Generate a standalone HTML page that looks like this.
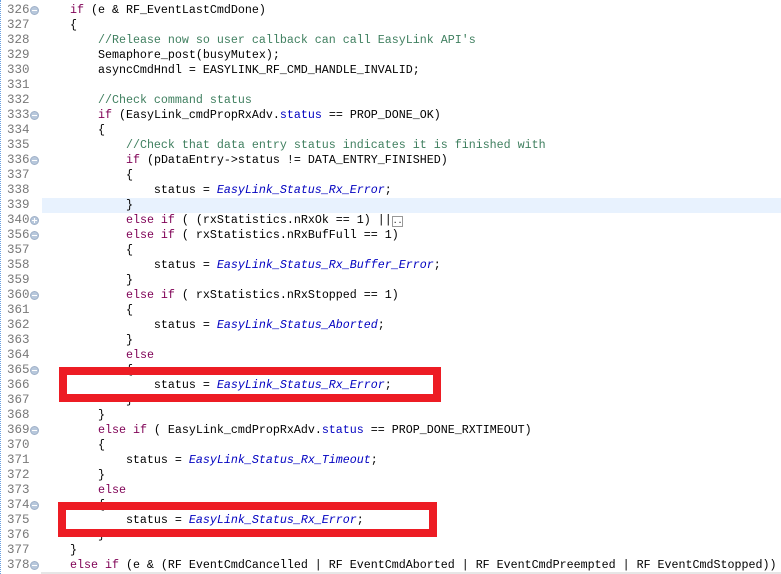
<!DOCTYPE html>
<html><head><meta charset="utf-8"><style>
body{margin:0;width:781px;height:574px;overflow:hidden;background:#fff;position:relative;font-family:"Liberation Mono",monospace;font-size:11.67px;}
#gut{position:absolute;left:0;top:0;width:41px;height:574px;border-left:1px dotted #6aa0e0;box-sizing:border-box;}
.r{position:absolute;left:0;height:15px;line-height:15px;white-space:pre;width:781px}
.n{position:absolute;left:7px;color:#787878;font-size:12.5px}
.c{position:absolute;left:42px;color:#000}
.k{color:#7f0055}
.m{color:#3f7f5f}
.e{color:#0000c0;font-style:italic}
.f{position:absolute;left:30px;top:3px;width:9px;height:9px;border-radius:50%;background:#b8c8dc;border:1px solid #9fb0c8;box-sizing:border-box}
.f::after{content:"";position:absolute;left:1px;top:3px;width:5px;height:1px;background:#fff}
.p::before{content:"";position:absolute;left:3px;top:1px;width:1px;height:5px;background:#fff}
.hl{background:#e8f2fe}
.box{position:absolute;border:8px solid #ed1c24;box-sizing:border-box}
</style></head><body>
<div id="gut"></div>
<div class="r" style="top:3px"><span class="n">326</span><i class="f"></i><span class="c">    <span class="k">if</span> (e &amp; RF_EventLastCmdDone)</span></div>
<div class="r" style="top:18px"><span class="n">327</span><span class="c">    {</span></div>
<div class="r" style="top:33px"><span class="n">328</span><span class="c">        <span class="m">//Release now so user callback can call EasyLink API's</span></span></div>
<div class="r" style="top:48px"><span class="n">329</span><span class="c">        Semaphore_post(busyMutex);</span></div>
<div class="r" style="top:63px"><span class="n">330</span><span class="c">        asyncCmdHndl = EASYLINK_RF_CMD_HANDLE_INVALID;</span></div>
<div class="r" style="top:78px"><span class="n">331</span></div>
<div class="r" style="top:93px"><span class="n">332</span><span class="c">        <span class="m">//Check command status</span></span></div>
<div class="r" style="top:108px"><span class="n">333</span><i class="f"></i><span class="c">        <span class="k">if</span> (EasyLink_cmdPropRxAdv.<span style="color:#0000c0">status</span> == PROP_DONE_OK)</span></div>
<div class="r" style="top:123px"><span class="n">334</span><span class="c">        {</span></div>
<div class="r" style="top:138px"><span class="n">335</span><span class="c">            <span class="m">//Check that data entry status indicates it is finished with</span></span></div>
<div class="r" style="top:153px"><span class="n">336</span><i class="f"></i><span class="c">            <span class="k">if</span> (pDataEntry-&gt;status != DATA_ENTRY_FINISHED)</span></div>
<div class="r" style="top:168px"><span class="n">337</span><span class="c">            {</span></div>
<div class="r" style="top:183px"><span class="n">338</span><span class="c">                status = <span class="e">EasyLink_Status_Rx_Error</span>;</span></div>
<div class="r" style="top:198px"><span class="n">339</span><span class="c hl" style="width:739px">            }</span></div>
<div class="r" style="top:213px"><span class="n">340</span><i class="f p"></i><span class="c">            <span class="k">else if</span> ( (rxStatistics.nRxOk == 1) ||<span style="border:1px solid #999;font-size:8px">..</span></span></div>
<div class="r" style="top:228px"><span class="n">356</span><i class="f"></i><span class="c">            <span class="k">else if</span> ( rxStatistics.nRxBufFull == 1)</span></div>
<div class="r" style="top:243px"><span class="n">357</span><span class="c">            {</span></div>
<div class="r" style="top:258px"><span class="n">358</span><span class="c">                status = <span class="e">EasyLink_Status_Rx_Buffer_Error</span>;</span></div>
<div class="r" style="top:273px"><span class="n">359</span><span class="c">            }</span></div>
<div class="r" style="top:288px"><span class="n">360</span><i class="f"></i><span class="c">            <span class="k">else if</span> ( rxStatistics.nRxStopped == 1)</span></div>
<div class="r" style="top:303px"><span class="n">361</span><span class="c">            {</span></div>
<div class="r" style="top:318px"><span class="n">362</span><span class="c">                status = <span class="e">EasyLink_Status_Aborted</span>;</span></div>
<div class="r" style="top:333px"><span class="n">363</span><span class="c">            }</span></div>
<div class="r" style="top:348px"><span class="n">364</span><span class="c">            <span class="k">else</span></span></div>
<div class="r" style="top:363px"><span class="n">365</span><i class="f"></i><span class="c">            {</span></div>
<div class="r" style="top:378px"><span class="n">366</span><span class="c">                status = <span class="e">EasyLink_Status_Rx_Error</span>;</span></div>
<div class="r" style="top:393px"><span class="n">367</span><span class="c">            }</span></div>
<div class="r" style="top:408px"><span class="n">368</span><span class="c">        }</span></div>
<div class="r" style="top:423px"><span class="n">369</span><i class="f"></i><span class="c">        <span class="k">else if</span> ( EasyLink_cmdPropRxAdv.<span style="color:#0000c0">status</span> == PROP_DONE_RXTIMEOUT)</span></div>
<div class="r" style="top:438px"><span class="n">370</span><span class="c">        {</span></div>
<div class="r" style="top:453px"><span class="n">371</span><span class="c">            status = <span class="e">EasyLink_Status_Rx_Timeout</span>;</span></div>
<div class="r" style="top:468px"><span class="n">372</span><span class="c">        }</span></div>
<div class="r" style="top:483px"><span class="n">373</span><span class="c">        <span class="k">else</span></span></div>
<div class="r" style="top:498px"><span class="n">374</span><i class="f"></i><span class="c">        {</span></div>
<div class="r" style="top:513px"><span class="n">375</span><span class="c">            status = <span class="e">EasyLink_Status_Rx_Error</span>;</span></div>
<div class="r" style="top:528px"><span class="n">376</span><span class="c">        }</span></div>
<div class="r" style="top:543px"><span class="n">377</span><span class="c">    }</span></div>
<div class="r" style="top:558px"><span class="n">378</span><i class="f"></i><span class="c">    <span class="k">else if</span> (e &amp; (RF EventCmdCancelled | RF EventCmdAborted | RF EventCmdPreempted | RF EventCmdStopped))</span></div>
<div class="box" style="left:59px;top:367px;width:382px;height:35px"></div>
<div class="box" style="left:58px;top:502px;width:379px;height:35px"></div>
<div style="position:absolute;left:41px;top:572px;width:740px;height:2px;background:#e6e6e6"></div>
</body></html>
